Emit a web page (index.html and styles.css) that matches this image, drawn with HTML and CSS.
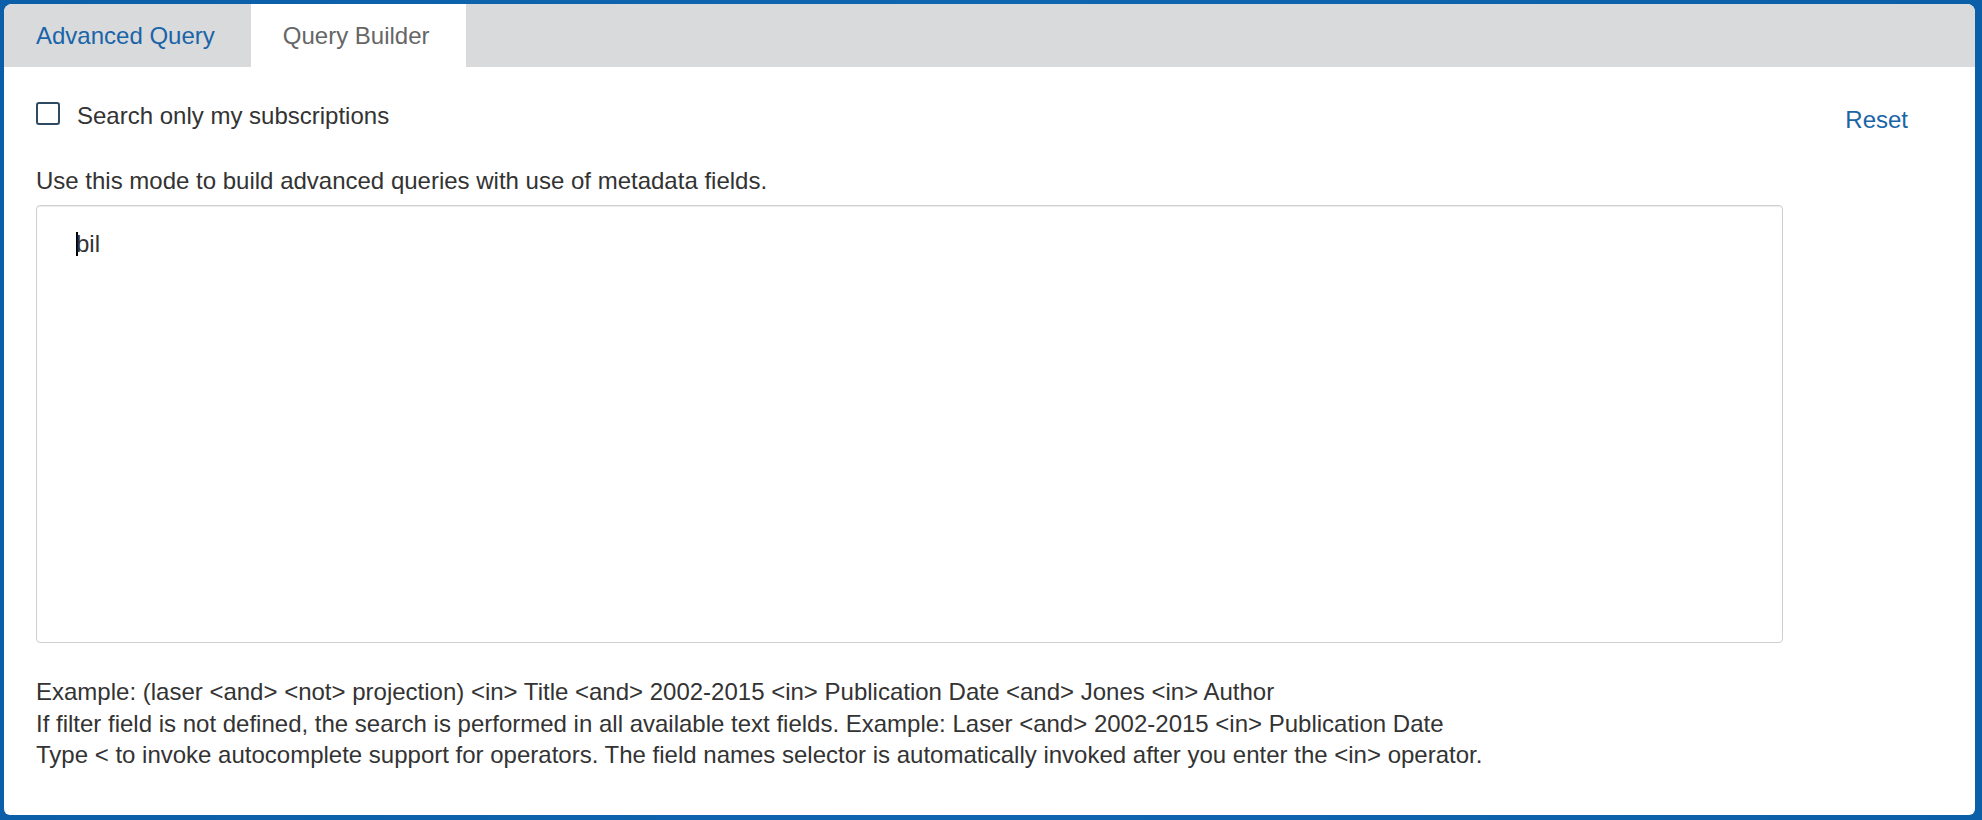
FILE: index.html
```html
<!DOCTYPE html>
<html lang="en">
<head>
<meta charset="utf-8">
<title>Query Builder</title>
<link rel="stylesheet" href="styles.css">
</head>
<body>
<div class="panel">
  <div class="tabs">
    <a class="tab">Advanced Query</a>
    <a class="tab active">Query Builder</a>
  </div>
  <div class="content">
    <div class="top-row">
      <label class="check"><span class="box"></span><span>Search only my subscriptions</span></label>
      <a class="reset">Reset</a>
    </div>
    <p class="desc">Use this mode to build advanced queries with use of metadata fields.</p>
    <div class="editor"><span class="caret"></span>bil</div>
    <div class="help">
      <div>Example: (laser &lt;and&gt; &lt;not&gt; projection) &lt;in&gt; Title &lt;and&gt; 2002-2015 &lt;in&gt; Publication Date &lt;and&gt; Jones &lt;in&gt; Author</div>
      <div>If filter field is not defined, the search is performed in all available text fields. Example: Laser &lt;and&gt; 2002-2015 &lt;in&gt; Publication Date</div>
      <div>Type &lt; to invoke autocomplete support for operators. The field names selector is automatically invoked after you enter the &lt;in&gt; operator.</div>
    </div>
  </div>
</div>
</body>
</html>
```

FILE: styles.css
```css
* { box-sizing: border-box; }

html, body {
  height: 100%;
}

body {
  margin: 0;
  padding: 4px 7px 5px 4px;
  background: #0c61ab;
  background-image: linear-gradient(90deg, #0b5fa8 0%, #0f66b0 50%, #0b5fa8 100%);
  font-family: "Liberation Sans", Arial, Helvetica, sans-serif;
  font-size: 24px;
  color: #333;
}

.panel {
  height: 100%;
  background: #fff;
  border-radius: 8px 8px 6px 6px;
  overflow: hidden;
}

.tabs {
  display: flex;
  height: 63px;
  background: #d9dadc;
}

.tab {
  display: block;
  padding: 0 36px 0 32px;
  line-height: 63px;
  color: #1a64a8;
  white-space: nowrap;
}

.tab.active {
  background: #fff;
  color: #666;
}

.content {
  padding: 35px 67px 0 32px;
}

.top-row {
  display: flex;
  justify-content: space-between;
  align-items: flex-start;
}

.check {
  display: flex;
  align-items: flex-start;
  gap: 17px;
  line-height: 27px;
}

.box {
  width: 24px;
  height: 23px;
  border: 2px solid #2e4a63;
  border-radius: 3px;
  background: #fff;
}

.reset {
  margin-top: 4px;
  line-height: 27px;
  color: #1a64a6;
}

.desc {
  margin: 34px 0 0;
  line-height: 27px;
}

.editor {
  margin: 11px 125px 0 0;
  height: 438px;
  padding: 24px 38px;
  border: 1px solid #cfcfcf;
  border-radius: 4px;
  box-shadow: inset 0 1px 1px rgba(0, 0, 0, 0.08);
  line-height: 27px;
  color: #333;
}

.caret {
  display: inline-block;
  width: 2px;
  height: 24px;
  margin-left: 1px;
  margin-right: -2px;
  background: #000;
  vertical-align: -4px;
}

.help {
  margin-top: 33px;
  line-height: 31.7px;
}
```
